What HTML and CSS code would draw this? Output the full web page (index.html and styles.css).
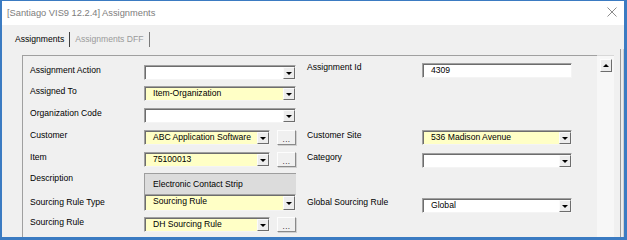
FILE: index.html
```html
<!DOCTYPE html>
<html lang="en">
	<head>
		<title>Assignments</title>
		<meta charset="utf-8">
		<link rel="stylesheet" href="styles.css">
	</head>
	<body>
		<div class="window">
			<div class="titlebar">
				<span class="title">[Santiago VIS9 12.2.4] Assignments</span>
				<svg class="close" width="10" height="10" viewBox="0 0 10 10">
					<path d="M0.5 0.5 L9.5 9.5 M9.5 0.5 L0.5 9.5" stroke="#8c8c8c" stroke-width="1" fill="none"/>
				</svg>
			</div>
			<div class="tabs">
				<span class="tab active">Assignments</span>
				<span class="tab">Assignments DFF</span>
			</div>
			<div class="main">
				<div class="panel">
					<div class="form">
						<!-- row 1 -->
						<div class="label">Assignment Action</div>
						<div class="combo"><span class="value"></span><span class="arrow"></span></div>
						<div class="label right up">Assignment Id</div>
						<div class="input up2"><span class="value">4309</span></div>

						<!-- row 2 -->
						<div class="label">Assigned To</div>
						<div class="combo yellow"><span class="value">Item-Organization</span><span class="arrow"></span></div>
						<div></div><div></div>

						<!-- row 3 -->
						<div class="label">Organization Code</div>
						<div class="combo"><span class="value"></span><span class="arrow"></span></div>
						<div></div><div></div>

						<!-- row 4 -->
						<div class="label">Customer</div>
						<div class="pick">
							<div class="combo yellow short"><span class="value">ABC Application Software</span><span class="arrow"></span></div>
							<div class="dots">...</div>
						</div>
						<div class="label right">Customer Site</div>
						<div class="combo yellow"><span class="value">536 Madison Avenue</span><span class="arrow"></span></div>

						<!-- row 5 -->
						<div class="label">Item</div>
						<div class="pick">
							<div class="combo yellow short"><span class="value">75100013</span><span class="arrow"></span></div>
							<div class="dots">...</div>
						</div>
						<div class="label right">Category</div>
						<div class="combo down1"><span class="value"></span><span class="arrow"></span></div>

						<!-- row 6 -->
						<div class="label">Description</div>
						<div class="desc">Electronic Contact Strip</div>
						<div></div><div></div>

						<!-- row 7 -->
						<div class="label">Sourcing Rule Type</div>
						<div class="combo yellow tall"><span class="value">Sourcing Rule</span><span class="arrow"></span></div>
						<div class="label right">Global Sourcing Rule</div>
						<div class="combo down1"><span class="value">Global</span><span class="arrow"></span></div>

						<!-- row 8 -->
						<div class="label">Sourcing Rule</div>
						<div class="pick">
							<div class="combo yellow short"><span class="value">DH Sourcing Rule</span><span class="arrow"></span></div>
							<div class="dots">...</div>
						</div>
						<div></div><div></div>
					</div>
				</div>
				<div class="scrollbar">
					<div class="scroll-up"><span class="tri-up"></span></div>
				</div>
				<div class="frame"></div>
			</div>
		</div>
	</body>
</html>
```

FILE: styles.css
```css
html, body {
    margin: 0;
    padding: 0;
    background: #f0f0f0;
}

.window {
    width: 627px;
    height: 240px;
    box-sizing: border-box;
    border-style: solid;
    border-color: #3b7bc2;
    border-width: 1px 3px 3px 2px;
    background: #f0f0f0;
    display: flex;
    flex-direction: column;
    font-family: "Liberation Sans", Arial, sans-serif;
    font-size: 8.6px;
    color: #000;
    overflow: hidden;
}

.titlebar {
    height: 24px;
    flex: none;
    background: #fff;
    display: flex;
    align-items: center;
    justify-content: space-between;
    padding: 0 7px 0 5px;
}

.title {
    font-size: 9.3px;
    color: #7d7d7d;
}

.close {
    margin-top: -2px;
}

.tabs {
    height: 30px;
    flex: none;
    box-sizing: border-box;
    padding: 7px 0 0 12px;
    display: flex;
    align-items: flex-start;
}

.tab {
    height: 15px;
    line-height: 14px;
    padding: 0 5px 0 5px;
    color: #9a9a9a;
    border-right: 1px solid #7a7a7a;
}

.tab.active {
    color: #000;
    padding-left: 1px;
    border-right: 1px solid #404040;
}

.main {
    flex: 1;
    display: flex;
}

.panel {
    margin-left: 20px;
    width: 575px;
    box-sizing: border-box;
    border-top: 1px solid #a0a0a0;
    border-left: 1px solid #a0a0a0;
    padding: 9px 0 0 7px;
}

.form {
    display: grid;
    grid-template-columns: 114px 152px 126px 150px;
    grid-template-rows: 21px 22px 22px 22px 21px 24px 20px 22px;
}

.label {
    line-height: 11px;
    white-space: nowrap;
}

.label.right {
    padding-left: 11px;
}

.up {
    margin-top: -3px;
}

.up2 {
    margin-top: -2px;
}

.down1 {
    margin-top: 1px;
}

.combo, .input {
    height: 15px;
    box-sizing: border-box;
    display: flex;
    align-items: stretch;
    background: #fff;
    border: 1px solid;
    border-color: #a0a0a0 #f4f4f4 #f4f4f4 #a0a0a0;
    box-shadow: inset 1px 1px 0 #6d6d6d;
}

.yellow {
    background: #ffffc6;
}

.combo.short {
    width: 126px;
}

.combo.tall {
    height: 17px;
    margin-top: -3px;
}

.value {
    flex: 1;
    padding-left: 8px;
    line-height: 13px;
    white-space: nowrap;
    overflow: hidden;
}

.arrow {
    width: 12px;
    box-sizing: border-box;
    margin: 1px 0 0 0;
    border: 1px solid;
    border-color: #fbfbfb #6d6d6d #6d6d6d #fbfbfb;
    background: #ededed;
    display: flex;
    align-items: center;
    justify-content: center;
}

.arrow::after {
    content: "";
    border-left: 3px solid transparent;
    border-right: 3px solid transparent;
    border-top: 3px solid #000;
    margin-top: 1px;
}

.pick {
    display: flex;
    align-items: flex-start;
    gap: 7px;
}

.dots {
    width: 19px;
    height: 15px;
    box-sizing: border-box;
    border: 1px solid;
    border-color: #fdfdfd #8a8a8a #8a8a8a #fdfdfd;
    box-shadow: 1px 1px 0 #d0d0d0;
    background: #f0f0f0;
    text-align: center;
    line-height: 17px;
    font-size: 8px;
    letter-spacing: 0.5px;
}

.desc {
    height: 21px;
    box-sizing: border-box;
    background: #dcdcdc;
    border-top: 1px solid #9e9e9e;
    border-left: 1px solid #9e9e9e;
    padding-left: 8px;
    display: flex;
    align-items: center;
}

.scrollbar {
    width: 17px;
    border-top: 1px solid #d8d8d8;
    background: #f7f7f7;
    padding: 3px 0 0 3px;
    box-sizing: border-box;
}

.scroll-up {
    width: 12px;
    height: 13px;
    box-sizing: border-box;
    border: 1px solid;
    border-color: #fdfdfd #6d6d6d #6d6d6d #fdfdfd;
    background: #ededed;
    display: flex;
    align-items: center;
    justify-content: center;
}

.tri-up {
    border-left: 3px solid transparent;
    border-right: 3px solid transparent;
    border-bottom: 3px solid #000;
}

.frame {
    margin: -6px 0 0 6px;
    width: 4px;
    box-sizing: border-box;
    border-left: 1px solid #9a9a9a;
    border-right: 1px solid #d0d0d0;
    background: #ececec;
}
```
